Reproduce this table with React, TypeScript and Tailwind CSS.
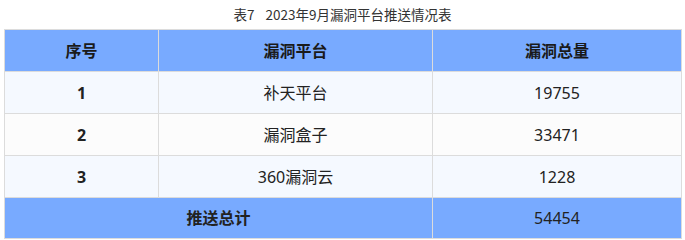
const rows = [
  { no: "1", platform: "补天平台", total: "19755" },
  { no: "2", platform: "漏洞盒子", total: "33471" },
  { no: "3", platform: "360漏洞云", total: "1228" },
];

export default function App() {
  return (
    <div
      className="w-[685px] h-[240px] bg-white text-[#222]"
      style={{ fontFamily: '"Noto Sans CJK SC", "Noto Sans", sans-serif' }}
    >
      <div className="h-[29px] flex items-center justify-center text-[13.5px] text-[#333]">
        <span>表7</span>
        <span className="ml-[11px]">2023年9月漏洞平台推送情况表</span>
      </div>
      <div className="px-[4px]">
        <table
          className="w-[677px] border-collapse table-fixed text-[16px]"
          style={{ fontFamily: '"Noto Sans", "Noto Sans CJK SC", sans-serif' }}
        >
          <colgroup>
            <col className="w-[154px]" />
            <col className="w-[274px]" />
            <col className="w-[249px]" />
          </colgroup>
          <thead>
            <tr className="h-[42px] bg-[#78aaff] font-bold text-[#1a1a1a]">
              <th className="border border-[#dcdcdc] text-center">序号</th>
              <th className="border border-[#dcdcdc] text-center">漏洞平台</th>
              <th className="border border-[#dcdcdc] text-center">漏洞总量</th>
            </tr>
          </thead>
          <tbody>
            {rows.map((r, i) => (
              <tr
                key={r.no}
                className={`h-[42px] ${i % 2 === 1 ? "bg-[#fcfcfc]" : "bg-[#f5f9ff]"}`}
              >
                <td className="border border-[#dcdcdc] text-center font-bold">{r.no}</td>
                <td className="border border-[#dcdcdc] text-center">{r.platform}</td>
                <td className="border border-[#dcdcdc] text-center">{r.total}</td>
              </tr>
            ))}
            <tr className="h-[41px] bg-[#78aaff]">
              <td colSpan={2} className="border border-[#dcdcdc] text-center font-bold">
                推送总计
              </td>
              <td className="border border-[#dcdcdc] text-center">54454</td>
            </tr>
          </tbody>
        </table>
      </div>
    </div>
  );
}
